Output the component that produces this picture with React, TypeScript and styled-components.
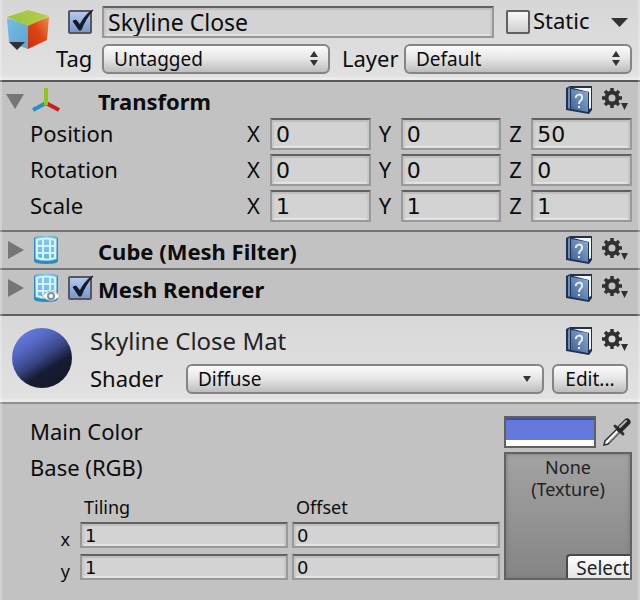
import React, { useId } from "react";
import styled, { createGlobalStyle } from "styled-components";

const sans = `"Noto Sans", "Open Sans", sans-serif`;
const digits = `"DejaVu Sans", sans-serif`;

const GlobalStyle = createGlobalStyle`
  *, *::before, *::after { box-sizing: border-box; }
  body { margin: 0; background: #c2c2c2; font-family: ${sans}; color: #0c0c0c; }
  input, select, button { font-family: inherit; color: inherit; margin: 0; }
`;

const Inspector = styled.main`
  position: relative;
  min-height: 100vh;
  background: #c2c2c2;
  font-size: 22px;
  line-height: 28px;
  overflow: hidden;

  &::after {
    content: "";
    position: absolute;
    inset: 0;
    border: solid rgba(255, 255, 255, 0.25);
    border-width: 0 2px;
    pointer-events: none;
  }
`;

const ObjectHeader = styled.header`
  display: flex;
  gap: 6px;
  height: 82px;
  padding: 6px 8px 0 6px;
  background: linear-gradient(#d6d6d6, #e1e1e1 76px, #ebebeb 78px);
  border-bottom: 2px solid #595959;
`;

const HeaderRows = styled.div`
  flex: 1;
  min-width: 0;
`;

const NameRow = styled.div`
  display: flex;
  align-items: center;
  height: 32px;
  padding-left: 12px;
`;

const TagRow = styled.div`
  display: flex;
  align-items: center;
  height: 30px;
  margin-top: 6px;
`;

const FieldLabel = styled.label<{ $width: number }>`
  flex: 0 0 ${(p) => p.$width}px;
  height: 30px;
  white-space: nowrap;
`;

const LayerLabel = styled.label`
  flex: 0 0 74px;
  height: 30px;
  padding-left: 12px;
`;

const Tick = styled.span<{ $gap: number }>`
  position: relative;
  flex: none;
  width: 24px;
  height: 24px;
  margin-right: ${(p) => p.$gap}px;

  input {
    appearance: none;
    display: block;
    width: 24px;
    height: 24px;
    border: 2px solid #606060;
    border-radius: 2px;
    background: linear-gradient(#f8f8f8, #d0d0d0);
  }
  input:checked {
    background: linear-gradient(#b6c8ea, #7597d3);
    border-color: #56585e;
  }
  svg {
    position: absolute;
    left: 0;
    top: -2px;
    display: none;
    pointer-events: none;
  }
  input:checked + svg {
    display: block;
  }
`;

const TextField = styled.input<{ $small?: boolean; $numeric?: boolean }>`
  display: block;
  width: 100%;
  min-width: 0;
  height: ${(p) => (p.$small ? 26 : 32)}px;
  padding: 0 4px;
  padding-left: ${(p) => (p.$small ? 3 : 4)}px;
  border: 2px solid #999;
  border-top-color: #606060;
  border-radius: 0;
  outline: none;
  background: #d3d3d3;
  box-shadow: inset 0 2px 1px #bebebe, inset 2px 0 1px #c8c8c8, inset -2px 0 1px #c8c8c8,
    inset 0 -2px #e4e4e4;
  && {
    font-family: ${(p) => (p.$numeric ? digits : sans)};
  }
  font-size: ${(p) => (p.$small ? 18 : p.$numeric ? 22 : 23)}px;
`;

const StaticWrap = styled.span`
  display: flex;
  align-items: center;
  flex: none;
  padding: 0 3px 0 12px;
`;

const StaticLabel = styled.label`
  flex: 0 0 78px;
  height: 32px;
`;

const IconButton = styled.button`
  display: flex;
  padding: 0;
  border: 0;
  background: none;
`;

const PopupBox = styled.span`
  position: relative;
  flex: 1;
  min-width: 0;
  height: 30px;

  select {
    appearance: none;
    display: block;
    width: 100%;
    height: 30px;
    padding: 0 28px 0 10px;
    border: 2px solid #858585;
    border-radius: 6px;
    background: linear-gradient(#fbfbfb, #e5e5e5 50%, #bdbdbd);
    font-size: 19px;
    line-height: 24px;
  }
  svg {
    position: absolute;
    right: 10px;
    top: 6px;
    pointer-events: none;
  }
`;

const PushButton = styled.button`
  flex: none;
  width: 76px;
  height: 30px;
  padding: 0;
  border: 2px solid #858585;
  border-radius: 6px;
  background: linear-gradient(#fbfbfb, #e5e5e5 50%, #bdbdbd);
  font-size: 19px;
  line-height: 24px;
`;

const Component = styled.section<{ $bottom: number; $line: string }>`
  padding-bottom: ${(p) => p.$bottom}px;
  border-bottom: 2px solid ${(p) => p.$line};
`;

const ComponentBar = styled.div`
  display: flex;
  align-items: center;
  height: 36px;
  padding: 0 10px 0 6px;
`;

const Foldout = styled(IconButton)`
  flex: 0 0 26px;
`;

const ComponentIcon = styled.span`
  display: flex;
  flex: 0 0 36px;
`;

const TickSlot = styled.span`
  display: flex;
  flex: 0 0 30px;
`;

const ComponentTitle = styled.h2`
  flex: 1;
  margin: 0;
  padding-top: 2px;
  font-size: 22px;
  font-weight: 700;
  line-height: 28px;
`;

const Tools = styled.span`
  display: flex;
  align-items: center;
  gap: 8px;
`;

const VectorRows = styled.div`
  display: grid;
  gap: 4px;
  padding: 0 8px 0 30px;
`;

const VectorRow = styled.div`
  display: grid;
  grid-template-columns: 217px 23px 1fr 30px 1fr 30px 1fr;
  align-items: center;
  height: 32px;
`;

const VectorName = styled.span`
  height: 30px;
`;

const Axis = styled.label<{ $first?: boolean }>`
  height: 30px;
  padding-left: ${(p) => (p.$first ? 0 : 8)}px;
`;

const MaterialHeader = styled.section`
  display: flex;
  gap: 16px;
  height: 88px;
  padding: 8px 10px 0 10px;
  background: linear-gradient(#d8d8d8, #e1e1e1 82px, #ebebeb 84px);
  border-bottom: 2px solid #909090;
`;

const MaterialTitle = styled.h2`
  flex: 1;
  margin: 0;
  color: #222;
  font-size: 24px;
  font-weight: 400;
  line-height: 34px;
`;

const MaterialTop = styled.div`
  display: flex;
  align-items: center;
  height: 34px;
`;

const ShaderRow = styled.div`
  display: flex;
  align-items: center;
  height: 30px;
  margin-top: 6px;
`;

const EditSlot = styled.span`
  display: flex;
  padding: 0 2px 0 8px;
`;

const MaterialBody = styled.section`
  padding: 12px 8px 20px 30px;
`;

const ColorRow = styled.div`
  display: flex;
  align-items: center;
  height: 32px;
`;

const RowName = styled.span`
  flex: 1;
  height: 30px;
`;

const Swatch = styled.button`
  width: 92px;
  height: 32px;
  padding: 0;
  border: 2px solid #606060;
  background: linear-gradient(#3f4f98 0 2px, #6279db 2px 22px, #fff 22px);
`;

const Dropper = styled(IconButton)`
  flex: 0 0 36px;
  padding-left: 6px;
`;

const TextureRow = styled.div`
  display: flex;
  gap: 4px;
  margin-top: 4px;
`;

const TextureSettings = styled.div`
  flex: 1;
  min-width: 0;
  padding-top: 1px;
`;

const TilingTable = styled.table`
  width: 100%;
  margin-top: 13px;
  border-collapse: collapse;
  table-layout: fixed;
  font-size: 18px;

  th {
    padding: 0;
    font-weight: 400;
    text-align: left;
    line-height: 26px;
  }
  thead th {
    height: 28px;
    padding: 0 0 2px 4px;
  }
  thead th:first-child {
    width: 50px;
  }
  thead th:last-child {
    padding-left: 6px;
  }
  tbody th {
    padding: 4px 10px 2px 0;
    text-align: right;
  }
  td {
    height: 32px;
    padding: 0 2px 6px 0;
    vertical-align: top;
  }
  td + td {
    padding: 0 0 6px 2px;
  }
`;

const Thumbnail = styled.div`
  position: relative;
  flex: none;
  width: 128px;
  height: 128px;
  padding-top: 2px;
  border: 2px solid #626262;
  background: linear-gradient(#a3a3a3, #858585);
  box-shadow: inset 0 0 4px #777;
  color: #222;
  font-size: 18px;
  line-height: 22px;
  text-align: center;
`;

const SelectTab = styled.button`
  position: absolute;
  right: 0;
  bottom: 0;
  width: 64px;
  height: 24px;
  padding: 0 1px 0 0;
  border: 2px solid #4a4a4a;
  border-width: 2px 0 0 2px;
  border-radius: 4px 0 0 0;
  background: linear-gradient(#fff, #e4e4e4);
  font-size: 19px;
  line-height: 24px;
  text-align: right;
`;

function Check({ label, checked, id, gap = 0 }: { label?: string; checked?: boolean; id?: string; gap?: number }) {
  return (
    <Tick $gap={gap}>
      <input type="checkbox" id={id} aria-label={label} defaultChecked={checked} />
      <svg width="26" height="26" viewBox="0 0 26 26" aria-hidden="true">
        <path d="M5 13 8 12 12 17C15 11 19 5 25 2 20 8 16 14 13 22H11Z" fill="#161a28" stroke="#161a28" strokeWidth="1" strokeLinejoin="round" />
      </svg>
    </Tick>
  );
}

function Popup({ id, value, single }: { id: string; value: string; single?: boolean }) {
  return (
    <PopupBox>
      <select id={id} defaultValue={value}>
        <option>{value}</option>
      </select>
      <svg width="12" height="18" viewBox="0 0 12 18" fill="#333" aria-hidden="true">
        {single ? <path d="M1 6H9L5 12Z" /> : <path d="M2 7 6 1 10 7ZM2 10H10L6 16Z" />}
      </svg>
    </PopupBox>
  );
}

function CubeIcon() {
  return (
    <svg width="44" height="44" viewBox="0 0 44 44" aria-hidden="true">
      <defs>
        <linearGradient id="cubeTop" x1="0" x2="1"><stop stopColor="#9bc340" /><stop offset="1" stopColor="#b5cf4b" /></linearGradient>
        <linearGradient id="cubeLeft" x1="0" y1="0" x2="1" y2="1"><stop stopColor="#77bde2" /><stop offset="1" stopColor="#5ba5d2" /></linearGradient>
        <linearGradient id="cubeRight" x1="1" y1="0" x2="0" y2="1"><stop stopColor="#ef8d45" /><stop offset=".5" stopColor="#dc4515" /><stop offset="1" stopColor="#c73307" /></linearGradient>
      </defs>
      <path d="M1 12 22 19V43L3 36Z" fill="url(#cubeLeft)" />
      <path d="M22 19 43 11 41 34 22 43Z" fill="url(#cubeRight)" />
      <path d="M1 11 22 4 43 10 22 20Z" fill="url(#cubeTop)" />
      <path d="M3 36H19L11 44Z" fill="#303030" />
    </svg>
  );
}

function FoldArrow({ open }: { open?: boolean }) {
  return (
    <svg width="18" height="18" viewBox="0 0 18 18" fill="#767676" aria-hidden="true">
      {open ? <path d="M0 3H18L9 18Z" /> : <path d="M2 0 18 9 2 18Z" />}
    </svg>
  );
}

function AxesIcon() {
  return (
    <svg width="28" height="28" viewBox="0 0 28 28" strokeWidth="4" aria-hidden="true">
      <path d="M14 17 1 24" stroke="#258fc6" />
      <path d="M14 17 27 24" stroke="#d01c1c" />
      <path d="M14 2V19" stroke="#8ec919" />
    </svg>
  );
}

function MeshIcon({ eye }: { eye?: boolean }) {
  const fill = useId();
  return (
    <svg width="30" height="30" viewBox="0 0 30 30" aria-hidden="true">
      <defs>
        <linearGradient id={fill} x1="0" y1="0" x2="0" y2="1"><stop stopColor="#7fcdec" /><stop offset=".5" stopColor="#7cbfe6" /><stop offset="1" stopColor="#58b4d8" /></linearGradient>
      </defs>
      <path d="M2 3Q3 1 14 1T26 3V26Q26 29 14 29T2 26Z" fill="#3189bd" />
      <path d="M3 3Q6 1 14 1T25 3V24Q22 26 14 26T3 24Z" fill={`url(#${fill})`} />
      <path d="M5 5Q14 2 23 5V23Q14 26 5 23ZM11 4V25M18 4V25M5 11H23M5 18H23" fill="none" stroke="#d3f2fb" strokeWidth="2" />
      {eye && (
        <>
          <path d="M10 23Q19 13 28 23 19 32 10 23Z" fill="#fff" stroke="#a6b4bb" strokeWidth="1" />
          <circle cx="19" cy="23" r="4" fill="#7d949f" />
          <circle cx="19" cy="23" r="2" fill="#fff" />
        </>
      )}
    </svg>
  );
}

function ToolIcons() {
  const cover = useId();
  return (
    <Tools>
      <IconButton aria-label="Help">
        <svg width="28" height="28" viewBox="0 0 28 28" aria-hidden="true">
          <defs>
            <linearGradient id={cover} x1="0" y1="1" x2="1" y2="0"><stop stopColor="#405f96" /><stop offset="1" stopColor="#8daed3" /></linearGradient>
          </defs>
          <path d="M0 2 4 0H26V24L23 28 0 24Z" fill="#203254" />
          <path d="M2 3 4 1V23L2 22Z" fill="#6f8eb7" />
          <path d="M7 2H25V22L23 23V6Z" fill="#f5f8fc" />
          <path d="M5 3 22 6V26L5 23Z" fill={`url(#${cover})`} />
          <path d="M10 12C9 8 17 7 16 12 16 15 13 14 13 18M13 20V22" fill="none" stroke="#e9f2fb" strokeWidth="2" />
        </svg>
      </IconButton>
      <IconButton aria-label="Component options">
        <svg width="28" height="26" viewBox="0 0 28 26" aria-hidden="true">
          <circle cx="10" cy="11" r="5.5" fill="none" stroke="#303030" strokeWidth="4" />
          <path d="M10 1V5M10 17V21M0 11H4M16 11H20M3 4 6 7M14 15 17 18M17 4 14 7M6 15 3 18" stroke="#303030" strokeWidth="3.5" />
          <path d="M19 16H26L22.5 23Z" fill="#303030" />
        </svg>
      </IconButton>
    </Tools>
  );
}

function Sphere() {
  return (
    <svg width="64" height="64" viewBox="0 0 64 64" aria-hidden="true">
      <defs>
        <linearGradient id="sphereShade" x1=".2" y1=".08" x2=".74" y2=".92">
          <stop stopColor="#6378dc" /><stop offset=".25" stopColor="#5366c0" /><stop offset=".52" stopColor="#38447f" /><stop offset=".73" stopColor="#171c33" /><stop offset="1" stopColor="#15192d" />
        </linearGradient>
      </defs>
      <circle cx="32" cy="34" r="30" fill="url(#sphereShade)" />
    </svg>
  );
}

function DropperIcon() {
  return (
    <svg width="30" height="30" viewBox="0 0 30 30" aria-hidden="true">
      <path d="M2 28 3 24 15 12 18 15 6 27Z" fill="#fff" stroke="#333" strokeWidth="1.5" />
      <path d="M7 25 17 15" stroke="#999" strokeWidth="1.5" />
      <path d="M13 9 21 17" stroke="#333" strokeWidth="3" strokeLinecap="round" />
      <path d="M18 12 25 5" stroke="#292929" strokeWidth="7" strokeLinecap="round" />
      <path d="M18 10 24 4" stroke="#b5b5b5" strokeWidth="2" strokeLinecap="round" />
    </svg>
  );
}

interface BarProps {
  title: string;
  icon: React.ReactNode;
  open?: boolean;
  enabled?: boolean;
}

function Bar({ title, icon, open, enabled }: BarProps) {
  return (
    <ComponentBar>
      <Foldout aria-label={`Toggle ${title}`} aria-expanded={!!open}>
        <FoldArrow open={open} />
      </Foldout>
      <ComponentIcon>{icon}</ComponentIcon>
      <TickSlot>{enabled && <Check label={`Enable ${title}`} checked />}</TickSlot>
      <ComponentTitle>{title}</ComponentTitle>
      <ToolIcons />
    </ComponentBar>
  );
}

const vectors = [
  { name: "Position", values: ["0", "0", "50"] },
  { name: "Rotation", values: ["0", "0", "0"] },
  { name: "Scale", values: ["1", "1", "1"] },
];
const axes = ["X", "Y", "Z"];

export default function App() {
  return (
    <>
      <GlobalStyle />
      <Inspector>
        <ObjectHeader>
          <IconButton aria-label="Object icon"><CubeIcon /></IconButton>
          <HeaderRows>
            <NameRow>
              <Check label="Active" checked gap={10} />
              <TextField aria-label="Name" defaultValue="Skyline Close" />
              <StaticWrap>
                <Check id="static" gap={3} />
                <StaticLabel htmlFor="static">Static</StaticLabel>
                <IconButton aria-label="Static options">
                  <svg width="18" height="18" viewBox="0 0 18 18" aria-hidden="true">
                    <path d="M0 5H17L8.5 14Z" fill="#333" />
                  </svg>
                </IconButton>
              </StaticWrap>
            </NameRow>
            <TagRow>
              <FieldLabel htmlFor="tag" $width={46}>Tag</FieldLabel>
              <Popup id="tag" value="Untagged" />
              <LayerLabel htmlFor="layer">Layer</LayerLabel>
              <Popup id="layer" value="Default" />
            </TagRow>
          </HeaderRows>
        </ObjectHeader>

        <Component $bottom={8} $line="#757575">
          <Bar title="Transform" icon={<AxesIcon />} open />
          <VectorRows>
            {vectors.map((v) => (
              <VectorRow key={v.name} role="group" aria-label={v.name}>
                <VectorName>{v.name}</VectorName>
                {axes.map((axis, i) => (
                  <React.Fragment key={axis}>
                    <Axis $first={i === 0} htmlFor={v.name + axis}>{axis}</Axis>
                    <TextField $numeric id={v.name + axis} defaultValue={v.values[i]} />
                  </React.Fragment>
                ))}
              </VectorRow>
            ))}
          </VectorRows>
        </Component>

        <Component $bottom={0} $line="#757575">
          <Bar title="Cube (Mesh Filter)" icon={<MeshIcon />} />
        </Component>

        <Component $bottom={8} $line="#606060">
          <Bar title="Mesh Renderer" icon={<MeshIcon eye />} enabled />
        </Component>

        <MaterialHeader>
          <Sphere />
          <HeaderRows>
            <MaterialTop>
              <MaterialTitle>Skyline Close Mat</MaterialTitle>
              <ToolIcons />
            </MaterialTop>
            <ShaderRow>
              <FieldLabel htmlFor="shader" $width={96}>Shader</FieldLabel>
              <Popup id="shader" value="Diffuse" single />
              <EditSlot><PushButton>Edit...</PushButton></EditSlot>
            </ShaderRow>
          </HeaderRows>
        </MaterialHeader>

        <MaterialBody>
          <ColorRow>
            <RowName>Main Color</RowName>
            <Swatch aria-label="Main Color" />
            <Dropper aria-label="Pick color"><DropperIcon /></Dropper>
          </ColorRow>
          <TextureRow>
            <TextureSettings>
              <div>Base (RGB)</div>
              <TilingTable>
                <thead>
                  <tr><th aria-label="Axis" /><th>Tiling</th><th>Offset</th></tr>
                </thead>
                <tbody>
                  {["x", "y"].map((axis) => (
                    <tr key={axis}>
                      <th>{axis}</th>
                      <td><TextField $small $numeric aria-label={`Tiling ${axis}`} defaultValue="1" /></td>
                      <td><TextField $small $numeric aria-label={`Offset ${axis}`} defaultValue="0" /></td>
                    </tr>
                  ))}
                </tbody>
              </TilingTable>
            </TextureSettings>
            <Thumbnail>
              None<br />(Texture)
              <SelectTab>Select</SelectTab>
            </Thumbnail>
          </TextureRow>
        </MaterialBody>
      </Inspector>
    </>
  );
}
